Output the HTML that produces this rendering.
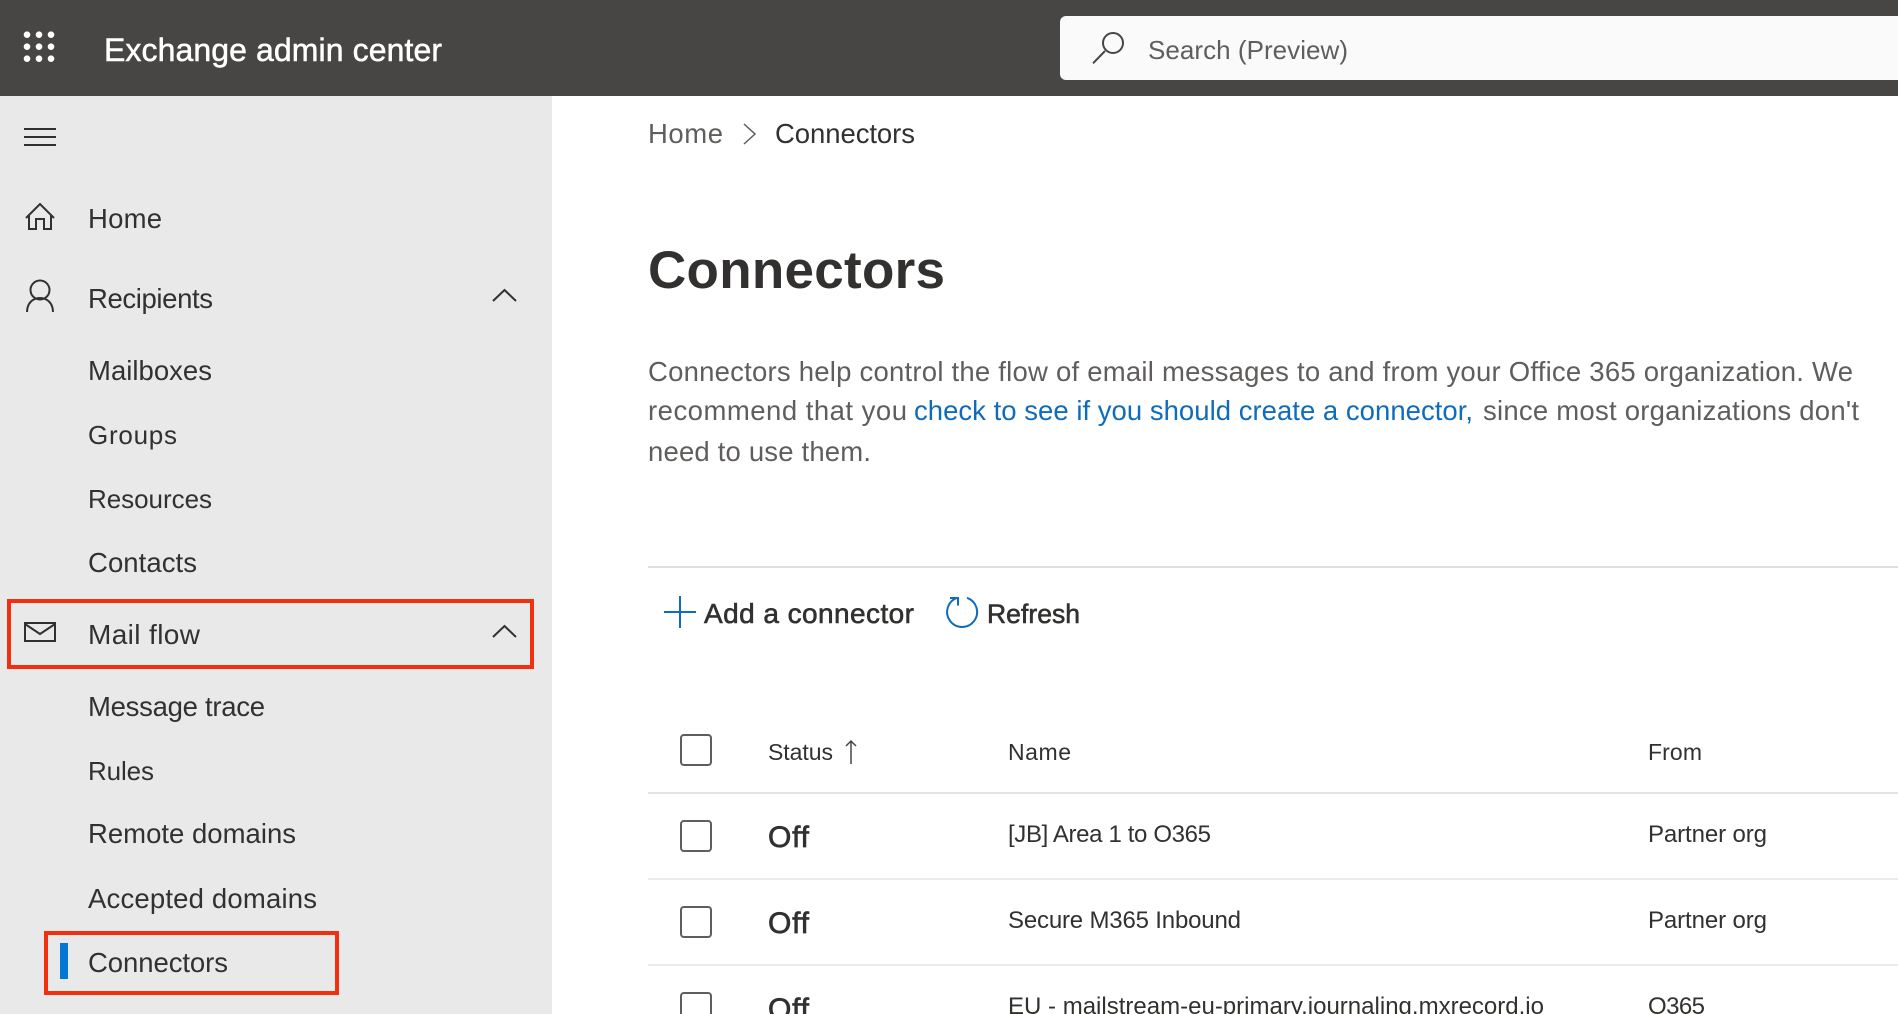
<!DOCTYPE html>
<html lang="en">
<head>
<meta charset="utf-8">
<title>Exchange admin center</title>
<style>
html,body{margin:0;padding:0;width:1898px;height:1014px;overflow:hidden;background:#fff}
svg{display:block;font-family:"Liberation Sans",sans-serif}
.n{font-size:27.5px;fill:#323130}
.p{font-size:27.5px;fill:#605e5c}
.t{font-size:24px;fill:#323130}
.h{font-size:23px;fill:#323130}
.i{fill:none;stroke:#323130;stroke-width:2}
.o{font-size:30px;fill:#323130;stroke:#323130;stroke-width:.7px}
</style>
</head>
<body>
<svg width="1898" height="1014" viewBox="0 0 1898 1014" xmlns="http://www.w3.org/2000/svg">
<rect width="1898" height="1014" fill="#ffffff"/>
<rect width="552" height="918" y="96" fill="#e9e9e9"/>
<rect width="1898" height="96" fill="#484644"/>

<!-- waffle -->
<g fill="#ffffff">
<circle cx="27" cy="34.700" r="3.300"/><circle cx="39" cy="34.700" r="3.300"/><circle cx="51" cy="34.700" r="3.300"/>
<circle cx="27" cy="46.700" r="3.300"/><circle cx="39" cy="46.700" r="3.300"/><circle cx="51" cy="46.700" r="3.300"/>
<circle cx="27" cy="58.700" r="3.300"/><circle cx="39" cy="58.700" r="3.300"/><circle cx="51" cy="58.700" r="3.300"/>
</g>
<text x="104" y="61" font-size="32px" fill="#ffffff" stroke="#ffffff" stroke-width=".5" textLength="338" lengthAdjust="spacing">Exchange admin center</text>

<!-- search -->
<path d="M1898 16H1066a6 6 0 0 0-6 6v52a6 6 0 0 0 6 6H1898z" fill="#fafafa"/>
<circle cx="1113" cy="43" r="10" fill="none" stroke="#484644" stroke-width="2"/>
<path d="M1105 51L1093 63.300" fill="none" stroke="#484644" stroke-width="2"/>
<text x="1148" y="59" font-size="26px" fill="#605e5c" textLength="200" lengthAdjust="spacing">Search (Preview)</text>

<!-- sidebar -->
<path class="i" d="M24 129H56M24 137H56M24 145H56"/>
<path class="i" d="M26 218L40 204L54 218M29 215V229H36V219H44V229H51V215"/>
<text class="n" x="88" y="228" textLength="74" lengthAdjust="spacing">Home</text>
<circle class="i" cx="40" cy="290" r="9.500"/>
<path class="i" d="M27 312c0-9 6-14 13-14s13 5 13 14"/>
<text class="n" x="88" y="308" textLength="125" lengthAdjust="spacing">Recipients</text>
<path class="i" d="M493 301L504.500 290L516 301"/>
<text class="n" x="88" y="380" textLength="124" lengthAdjust="spacing">Mailboxes</text>
<text class="n" x="88" y="444" font-size="26px" style="font-size:26px" textLength="89" lengthAdjust="spacing">Groups</text>
<text class="n" x="88" y="508" style="font-size:26px" textLength="124" lengthAdjust="spacing">Resources</text>
<text class="n" x="88" y="572" textLength="109" lengthAdjust="spacing">Contacts</text>

<rect x="9" y="601" width="523" height="66" fill="none" stroke="#f1300f" stroke-width="4"/>
<rect x="25" y="623" width="30" height="18" class="i"/>
<path class="i" d="M25 624L40 634L55 624"/>
<text class="n" x="88" y="644" style="font-size:28px" textLength="112" lengthAdjust="spacing">Mail flow</text>
<path class="i" d="M493 637L504.500 626L516 637"/>
<text class="n" x="88" y="716" textLength="177" lengthAdjust="spacing">Message trace</text>
<text class="n" x="88" y="780" style="font-size:26px" textLength="66" lengthAdjust="spacing">Rules</text>
<text class="n" x="88" y="843" textLength="208" lengthAdjust="spacing">Remote domains</text>
<text class="n" x="88" y="908" textLength="229" lengthAdjust="spacing">Accepted domains</text>
<rect x="46" y="933" width="291" height="60" fill="none" stroke="#f1300f" stroke-width="4"/>
<rect x="60" y="943" width="8" height="36" fill="#0078d4"/>
<text class="n" x="88" y="972" textLength="140" lengthAdjust="spacing">Connectors</text>

<!-- breadcrumb -->
<text class="p" x="648" y="143" textLength="75" lengthAdjust="spacing">Home</text>
<path d="M744 124L755 134L744 144" fill="none" stroke="#605e5c" stroke-width="1.500"/>
<text class="n" x="775" y="143" textLength="140" lengthAdjust="spacing">Connectors</text>

<!-- heading -->
<text x="648" y="288" font-size="53px" font-weight="700" fill="#323130" textLength="297" lengthAdjust="spacing">Connectors</text>

<!-- description -->
<text class="p" x="648" y="381" textLength="1205" lengthAdjust="spacing">Connectors help control the flow of email messages to and from your Office 365 organization. We</text>
<text class="p" x="648" y="420" textLength="259" lengthAdjust="spacing">recommend that you</text>
<text x="914" y="420" font-size="27.500px" fill="#0f6cbd" textLength="559" lengthAdjust="spacing">check to see if you should create a connector,</text>
<text class="p" x="1483" y="420" textLength="376" lengthAdjust="spacing">since most organizations don't</text>
<text class="p" x="648" y="461" textLength="223" lengthAdjust="spacing">need to use them.</text>

<!-- divider -->
<rect x="648" y="566" width="1250" height="2" fill="#e1dfdd"/>

<!-- toolbar -->
<path d="M664 612H696M680 596V628" fill="none" stroke="#0f6cbd" stroke-width="2"/>
<text x="704" y="623" font-size="28px" fill="#323130" stroke="#323130" stroke-width=".6" textLength="210" lengthAdjust="spacing">Add a connector</text>
<path d="M967 597.800A15 15 0 1 1 957.500 597.700" fill="none" stroke="#0f6cbd" stroke-width="2"/>
<path d="M950 598H958V605.500" fill="none" stroke="#0f6cbd" stroke-width="2"/>
<text x="987" y="623" font-size="26.500px" fill="#323130" stroke="#323130" stroke-width=".6" textLength="93" lengthAdjust="spacing">Refresh</text>

<!-- table header -->
<rect x="681" y="735" width="30" height="30" rx="3" fill="none" stroke="#605e5c" stroke-width="2"/>
<text class="h" x="768" y="760" textLength="65" lengthAdjust="spacing">Status</text>
<path d="M851 741V764M846 746L851 741L856 746" fill="none" stroke="#484644" stroke-width="1.500"/>
<text class="h" x="1008" y="760" textLength="63" lengthAdjust="spacing">Name</text>
<text class="h" x="1648" y="760" textLength="54" lengthAdjust="spacing">From</text>
<rect x="648" y="792" width="1250" height="2" fill="#e6e4e2"/>

<!-- row 1 -->
<rect x="681" y="821" width="30" height="30" rx="3" fill="none" stroke="#605e5c" stroke-width="2"/>
<text class="o" x="768" y="847" textLength="41" lengthAdjust="spacing">Off</text>
<text class="t" x="1008" y="842" textLength="203" lengthAdjust="spacing">[JB] Area 1 to O365</text>
<text class="t" x="1648" y="842" textLength="119" lengthAdjust="spacing">Partner org</text>
<rect x="648" y="878" width="1250" height="2" fill="#edebe9"/>

<!-- row 2 -->
<rect x="681" y="907" width="30" height="30" rx="3" fill="none" stroke="#605e5c" stroke-width="2"/>
<text class="o" x="768" y="933" textLength="41" lengthAdjust="spacing">Off</text>
<text class="t" x="1008" y="928" textLength="233" lengthAdjust="spacing">Secure M365 Inbound</text>
<text class="t" x="1648" y="928" textLength="119" lengthAdjust="spacing">Partner org</text>
<rect x="648" y="964" width="1250" height="2" fill="#edebe9"/>

<!-- row 3 -->
<rect x="681" y="993" width="30" height="21" fill="none"/>
<path d="M681 1014V996a3 3 0 0 1 3-3H708a3 3 0 0 1 3 3V1014" fill="none" stroke="#605e5c" stroke-width="2"/>
<text class="o" x="768" y="1019" textLength="41" lengthAdjust="spacing">Off</text>
<text class="t" x="1008" y="1014" textLength="536" lengthAdjust="spacing">EU - mailstream-eu-primary.journaling.mxrecord.io</text>
<text class="t" x="1648" y="1014" textLength="57" lengthAdjust="spacing">O365</text>
</svg>
</body>
</html>
